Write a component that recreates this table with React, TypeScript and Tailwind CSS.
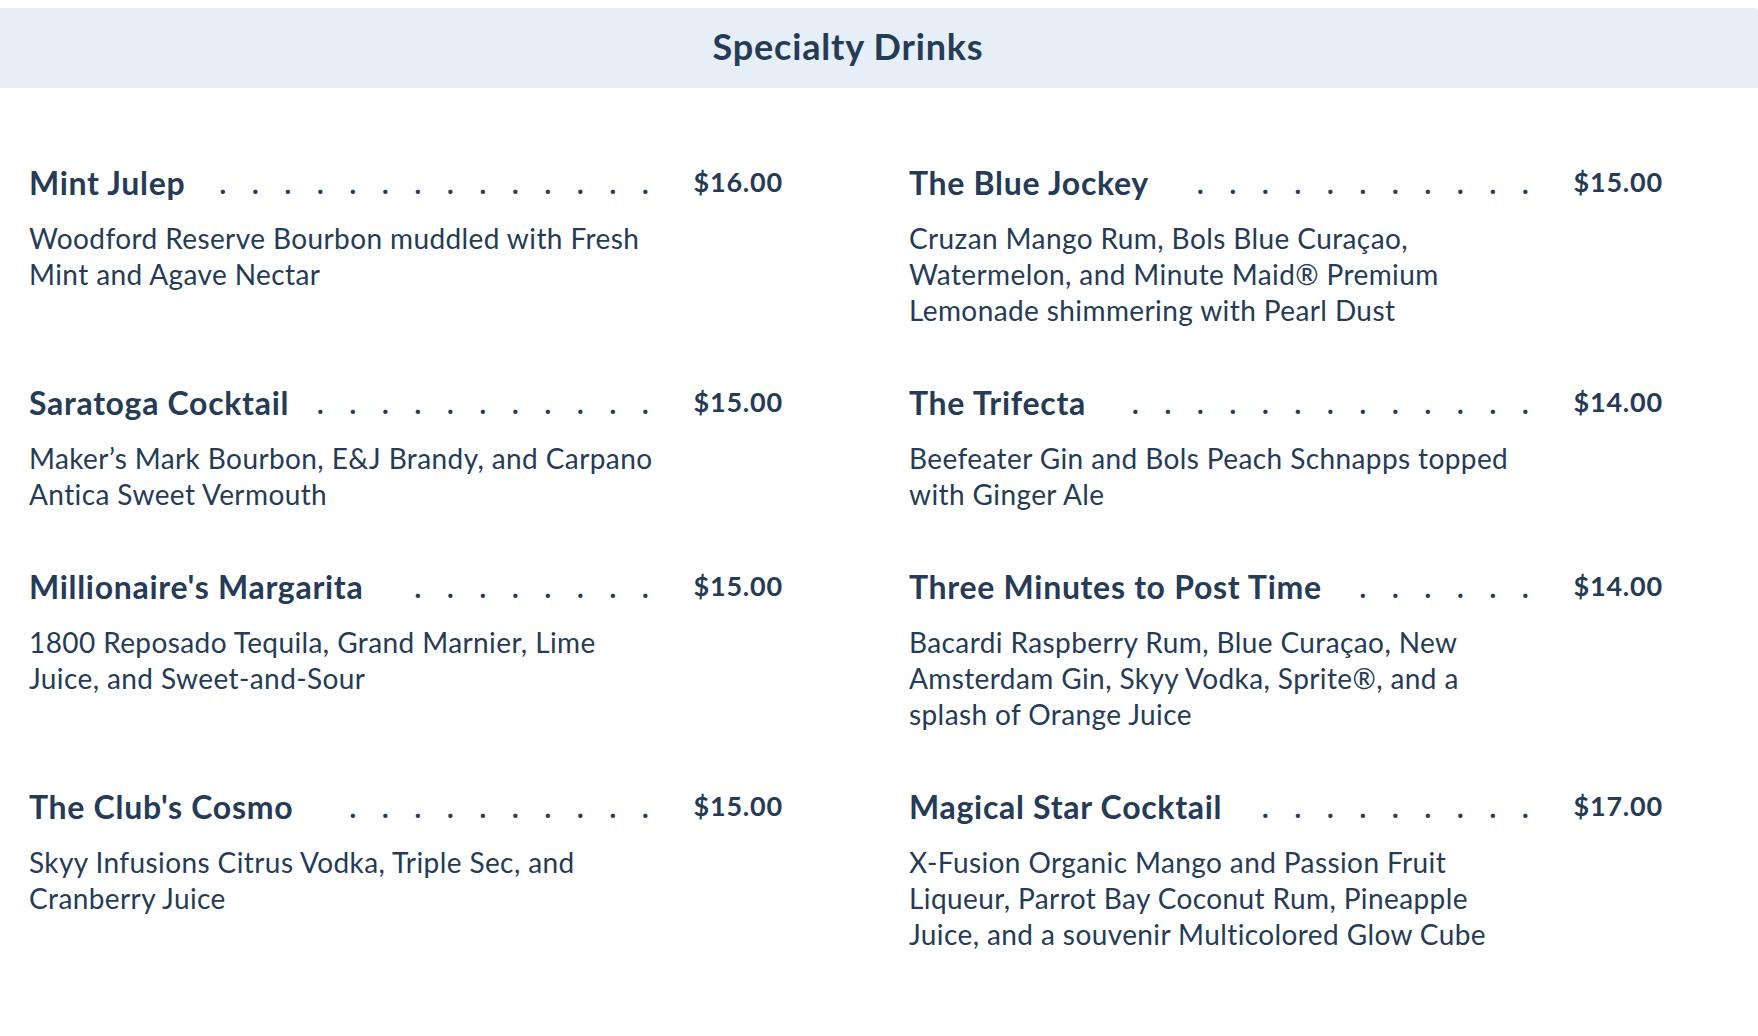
const drinks = [
  {
    name: 'Mint Julep',
    price: '$16.00',
    dots: 14,
    desc: 'Woodford Reserve Bourbon muddled with Fresh Mint and Agave Nectar',
  },
  {
    name: 'The Blue Jockey',
    price: '$15.00',
    dots: 11,
    desc: 'Cruzan Mango Rum, Bols Blue Curaçao, Watermelon, and Minute Maid® Premium Lemonade shimmering with Pearl Dust',
  },
  {
    name: 'Saratoga Cocktail',
    price: '$15.00',
    dots: 11,
    desc: 'Maker’s Mark Bourbon, E&J Brandy, and Carpano Antica Sweet Vermouth',
  },
  {
    name: 'The Trifecta',
    price: '$14.00',
    dots: 13,
    desc: 'Beefeater Gin and Bols Peach Schnapps topped with Ginger Ale',
  },
  {
    name: "Millionaire's Margarita",
    price: '$15.00',
    dots: 8,
    desc: '1800 Reposado Tequila, Grand Marnier, Lime Juice, and Sweet-and-Sour',
  },
  {
    name: 'Three Minutes to Post Time',
    price: '$14.00',
    dots: 6,
    desc: 'Bacardi Raspberry Rum, Blue Curaçao, New Amsterdam Gin, Skyy Vodka, Sprite®, and a splash of Orange Juice',
  },
  {
    name: "The Club's Cosmo",
    price: '$15.00',
    dots: 10,
    desc: 'Skyy Infusions Citrus Vodka, Triple Sec, and Cranberry Juice',
  },
  {
    name: 'Magical Star Cocktail',
    price: '$17.00',
    dots: 9,
    desc: 'X-Fusion Organic Mango and Passion Fruit Liqueur, Parrot Bay Coconut Rum, Pineapple Juice, and a souvenir Multicolored Glow Cube',
  },
];

type Drink = (typeof drinks)[number];

function Leader({ count }: { count: number }) {
  // dot leader, right-aligned against the price column
  return (
    <div className="mr-[32px] flex min-w-0 flex-1 justify-end">
      {Array.from({ length: count }).map((_, i) => (
        <span key={i} className="w-[32.5px] shrink-0 text-center text-[28px] font-bold leading-[40px]">
          .
        </span>
      ))}
    </div>
  );
}

function DrinkItem({ name, price, dots, desc }: Drink) {
  return (
    <div>
      <div className="flex items-start">
        <h3 className="shrink-0 text-[32px] font-bold leading-[40px] tracking-[0.7px]">{name}</h3>
        <Leader count={dots} />
        <span className="shrink-0 text-[27px] font-bold leading-[38px] tracking-[0.8px]">{price}</span>
      </div>
      <p className="mt-[17px] max-w-[630px] text-[28px] leading-[36px] tracking-[0.4px]">{desc}</p>
    </div>
  );
}

export default function App() {
  return (
    <div
      className="min-h-screen bg-white pt-2 text-[#253b56]"
      style={{ fontFamily: 'Lato, "Noto Sans", sans-serif' }}
    >
      <div className="flex h-[80px] items-center justify-center rounded-tr-[4px] bg-[#e6eef7] pb-[4px] pr-[62px]">
        <h2 className="text-[36px] font-bold tracking-[0.8px]">Specialty Drinks</h2>
      </div>
      <div className="mt-[75px] grid grid-cols-[754px_754px] gap-x-[126px] gap-y-[55px] pl-[29px]">
        {drinks.map((d) => (
          <DrinkItem key={d.name} {...d} />
        ))}
      </div>
    </div>
  );
}
